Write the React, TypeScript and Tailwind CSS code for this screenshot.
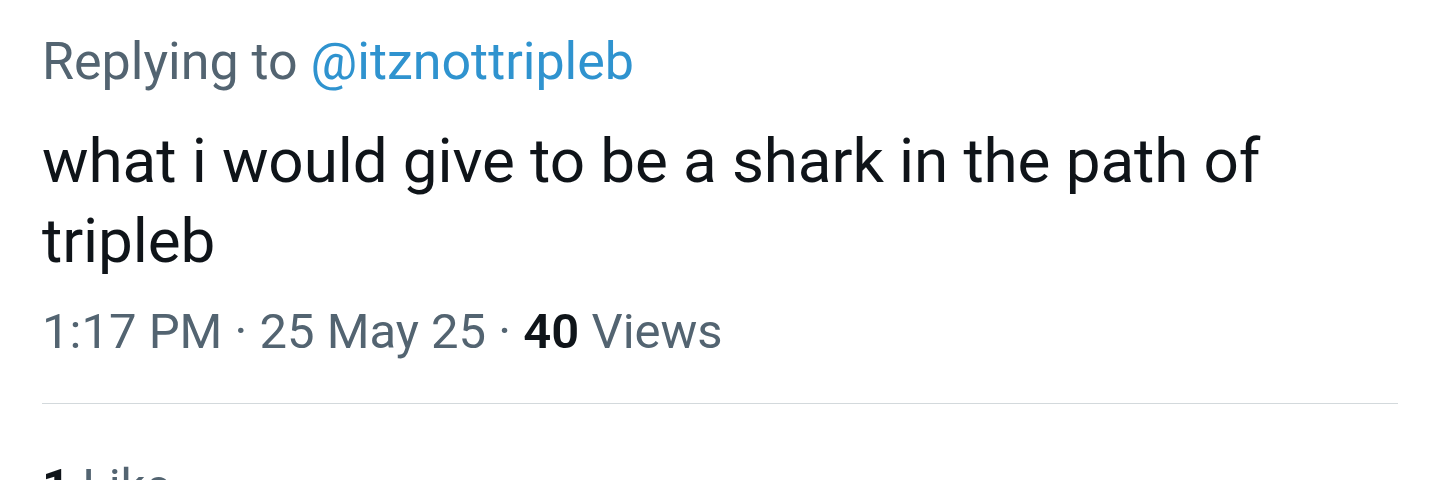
export default function App() {
  return (
    <div className="h-[480px] w-[1440px] overflow-hidden bg-white font-['Roboto',sans-serif]">
      <div className="px-[42px] pt-[32px]">
        {/* Reply context */}
        <div className="text-[52px] leading-[60px] text-[#536471]">
          Replying to <span className="text-[#2f93cf]">@itznottripleb</span>
        </div>

        {/* Tweet body */}
        <div className="mt-[29px] pr-[80px] text-[62px] leading-[80px] tracking-[-0.1px] text-[#0f1419]">
          what i would give to be a shark in the path of tripleb
        </div>

        {/* Meta */}
        <div className="mt-[21px] text-[49px] leading-[60px] text-[#536471]">
          1:17 PM · 25 May 25 · <span className="font-semibold text-[#0f1419]">40</span> Views
        </div>

        <div className="mt-[41px] h-px bg-[#d3d9dc]" />

        {/* Stats */}
        <div className="mt-[53px] text-[49px] leading-[60px] text-[#536471]">
          <span className="font-bold text-[#0f1419]">1</span> Like
        </div>
      </div>
    </div>
  );
}
